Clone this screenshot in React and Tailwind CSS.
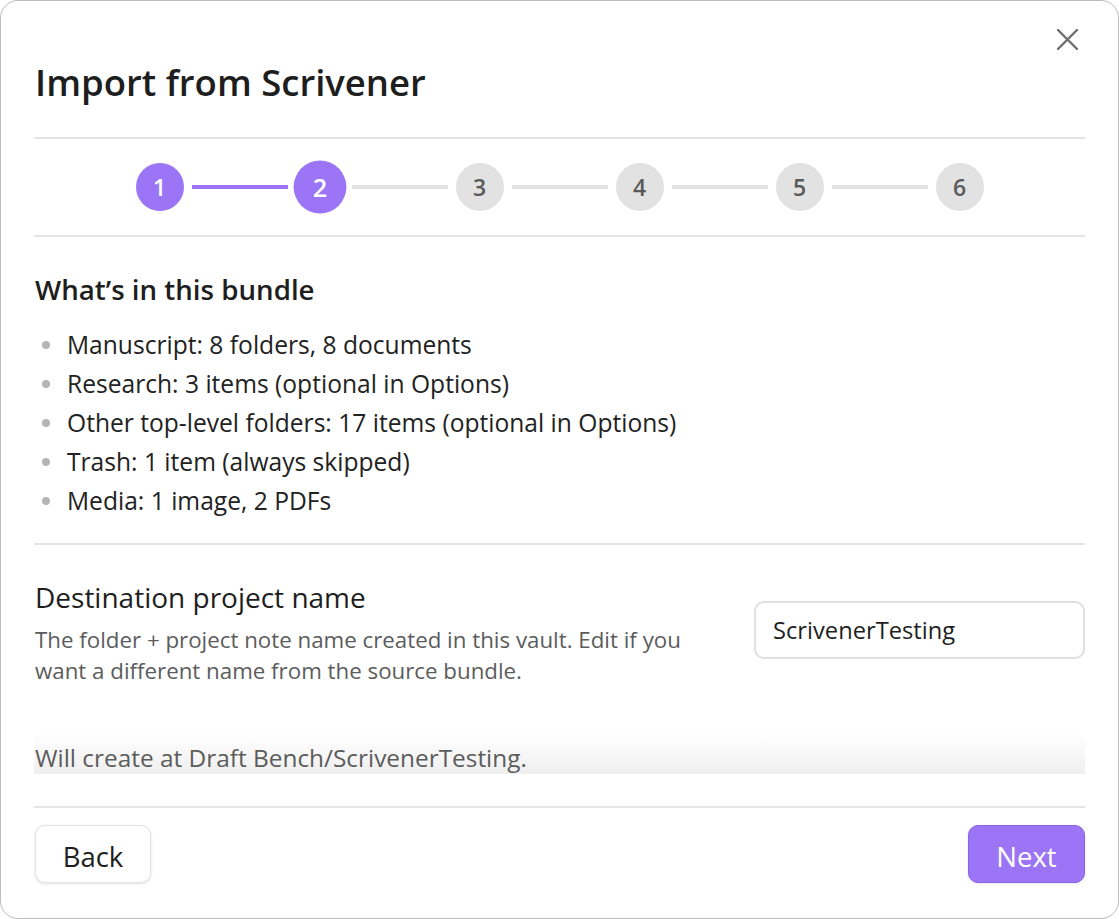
import { useState } from "react";

const bundleItems = [
  "Manuscript: 8 folders, 8 documents",
  "Research: 3 items (optional in Options)",
  "Other top-level folders: 17 items (optional in Options)",
  "Trash: 1 item (always skipped)",
  "Media: 1 image, 2 PDFs",
];

const steps = [1, 2, 3, 4, 5, 6];

function Divider() {
  return <div className="h-[2px] w-full bg-[#e4e4e4]" />;
}

function Stepper({ current }) {
  return (
    <div className="flex items-center justify-center py-[24px]">
      {steps.map((step, index) => {
        const done = step <= current;
        return (
          <div key={step} className="flex items-center">
            {index > 0 && (
              <div className={`mx-[8px] h-[4px] w-[96px] ${step <= current ? "bg-[#9b75f5]" : "bg-[#e2e2e2]"}`} />
            )}
            <div
              className={`flex h-[48px] w-[48px] items-center justify-center rounded-full text-[23px] font-semibold ${
                done ? "bg-[#9b75f5] text-white" : "bg-[#e2e2e2] text-[#5a5a5a]"
              } ${step === current ? "scale-110" : ""}`}
            >
              {step}
            </div>
          </div>
        );
      })}
    </div>
  );
}

export default function App() {
  const [name, setName] = useState("ScrivenerTesting");

  return (
    <div className="h-[919px] w-[1119px] bg-white font-['Open_Sans',sans-serif] text-[#222]">
      <div className="relative flex h-[919px] w-[1119px] flex-col rounded-[18px] border border-[#bcbcbc] bg-white px-[33px]">
        <button className="absolute right-[40px] top-[28px] text-[#6e6e6e]">
          <svg width="21" height="21" viewBox="0 0 21 21" fill="none" stroke="currentColor" strokeWidth="2.4" strokeLinecap="round">
            <path d="M1 1 20 20M20 1 1 20" />
          </svg>
        </button>

        <h1 className="pl-[1px] pt-[57px] pb-[31px] text-[36.5px] font-semibold leading-[48px] text-[#1e1e1e]">Import from Scrivener</h1>
        <Divider />

        <Stepper current={2} />
        <Divider />

        <h3 className="mt-[34px] pl-[1px] text-[27.7px] font-semibold leading-[36px] text-[#1e1e1e]">What’s in this bundle</h3>
        <ul className="mt-[18px]">
          {bundleItems.map((item) => (
            <li key={item} className="flex items-center text-[24.6px] leading-[39px]">
              <span className="ml-[8px] mr-[17px] h-[8px] w-[8px] rounded-full bg-[#b5b5b5]" />
              {item}
            </li>
          ))}
        </ul>

        <div className="mt-[23px]">
          <Divider />
        </div>

        <div className="mt-[34px] flex items-start">
          <div className="mr-[40px] flex-1 pl-[1px]">
            <div className="text-[28px] leading-[36px] text-[#1e1e1e]">Destination project name</div>
            <div className="mt-[9px] text-[22.3px] leading-[31px] text-[#5c5c5c]">
              The folder + project note name created in this vault. Edit if you want a different name from the source bundle.
            </div>
          </div>
          <input
            value={name}
            onChange={(event) => setName(event.target.value)}
            className="mt-[22px] h-[58px] w-[331px] rounded-[10px] border-2 border-[#e0e0e0] px-[17px] text-[23.7px] text-[#1e1e1e] outline-none"
          />
        </div>

        <div className="mt-[13px] flex h-[75px] items-end bg-[linear-gradient(to_bottom,#ffffff_45%,#efefef)] pl-[1px]">
          <span className="text-[24.4px] leading-[32px] text-[#5c5c5c]">Will create at Draft Bench/ScrivenerTesting.</span>
        </div>

        <div className="mt-[32px]">
          <Divider />
        </div>

        <div className="mt-[17px] flex items-center justify-between">
          <button className="ml-[1px] h-[58px] w-[116px] rounded-[10px] border border-[#e4e4e4] bg-white pt-[5px] text-[27.5px] text-[#1e1e1e] shadow-[0_1px_3px_rgba(0,0,0,0.12)]">
            Back
          </button>
          <button className="h-[58px] w-[117px] rounded-[10px] border border-[#8a63e6] bg-[#9b75f5] pt-[5px] text-[27.5px] text-white shadow-[0_1px_3px_rgba(0,0,0,0.1)]">
            Next
          </button>
        </div>
      </div>
    </div>
  );
}
